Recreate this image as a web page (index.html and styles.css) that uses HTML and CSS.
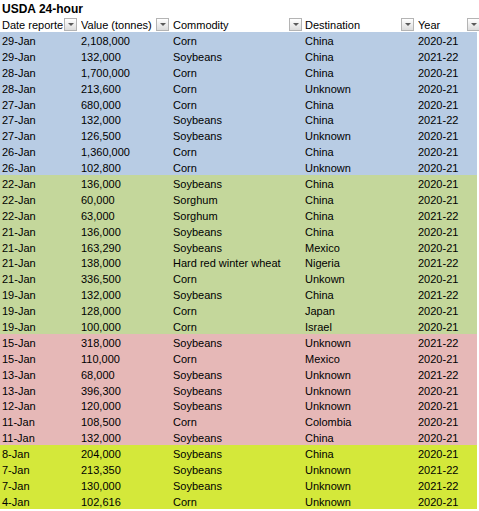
FILE: index.html
```html
<!DOCTYPE html>
<html>
<head>
<meta charset="utf-8">
<link rel="stylesheet" href="styles.css">
</head>
<body>
<div class="sheet">
  <div class="title">USDA 24-hour</div>
  <div class="row head">
    <div class="hc c1"><span class="ht">Date reported</span><span class="fb"></span></div>
    <div class="hc c2"><span class="ht">Value (tonnes)</span><span class="fb"></span></div>
    <div class="hc c3"><span class="ht">Commodity</span><span class="fb"></span></div>
    <div class="hc c4"><span class="ht">Destination</span><span class="fb"></span></div>
    <div class="hc c5"><span class="ht">Year</span><span class="fb"></span></div>
  </div>
  <div id="rows"></div>
  <div class="row blue"><div class="c1">29-Jan</div><div class="c2">2,108,000</div><div class="c3">Corn</div><div class="c4">China</div><div class="c5">2020-21</div></div>
  <div class="row blue"><div class="c1">29-Jan</div><div class="c2">132,000</div><div class="c3">Soybeans</div><div class="c4">China</div><div class="c5">2021-22</div></div>
  <div class="row blue"><div class="c1">28-Jan</div><div class="c2">1,700,000</div><div class="c3">Corn</div><div class="c4">China</div><div class="c5">2020-21</div></div>
  <div class="row blue"><div class="c1">28-Jan</div><div class="c2">213,600</div><div class="c3">Corn</div><div class="c4">Unknown</div><div class="c5">2020-21</div></div>
  <div class="row blue"><div class="c1">27-Jan</div><div class="c2">680,000</div><div class="c3">Corn</div><div class="c4">China</div><div class="c5">2020-21</div></div>
  <div class="row blue"><div class="c1">27-Jan</div><div class="c2">132,000</div><div class="c3">Soybeans</div><div class="c4">China</div><div class="c5">2021-22</div></div>
  <div class="row blue"><div class="c1">27-Jan</div><div class="c2">126,500</div><div class="c3">Soybeans</div><div class="c4">Unknown</div><div class="c5">2020-21</div></div>
  <div class="row blue"><div class="c1">26-Jan</div><div class="c2">1,360,000</div><div class="c3">Corn</div><div class="c4">China</div><div class="c5">2020-21</div></div>
  <div class="row blue"><div class="c1">26-Jan</div><div class="c2">102,800</div><div class="c3">Corn</div><div class="c4">Unknown</div><div class="c5">2020-21</div></div>
  <div class="row green"><div class="c1">22-Jan</div><div class="c2">136,000</div><div class="c3">Soybeans</div><div class="c4">China</div><div class="c5">2020-21</div></div>
  <div class="row green"><div class="c1">22-Jan</div><div class="c2">60,000</div><div class="c3">Sorghum</div><div class="c4">China</div><div class="c5">2020-21</div></div>
  <div class="row green"><div class="c1">22-Jan</div><div class="c2">63,000</div><div class="c3">Sorghum</div><div class="c4">China</div><div class="c5">2021-22</div></div>
  <div class="row green"><div class="c1">21-Jan</div><div class="c2">136,000</div><div class="c3">Soybeans</div><div class="c4">China</div><div class="c5">2020-21</div></div>
  <div class="row green"><div class="c1">21-Jan</div><div class="c2">163,290</div><div class="c3">Soybeans</div><div class="c4">Mexico</div><div class="c5">2020-21</div></div>
  <div class="row green"><div class="c1">21-Jan</div><div class="c2">138,000</div><div class="c3">Hard red winter wheat</div><div class="c4">Nigeria</div><div class="c5">2021-22</div></div>
  <div class="row green"><div class="c1">21-Jan</div><div class="c2">336,500</div><div class="c3">Corn</div><div class="c4">Unkown</div><div class="c5">2020-21</div></div>
  <div class="row green"><div class="c1">19-Jan</div><div class="c2">132,000</div><div class="c3">Soybeans</div><div class="c4">China</div><div class="c5">2021-22</div></div>
  <div class="row green"><div class="c1">19-Jan</div><div class="c2">128,000</div><div class="c3">Corn</div><div class="c4">Japan</div><div class="c5">2020-21</div></div>
  <div class="row green"><div class="c1">19-Jan</div><div class="c2">100,000</div><div class="c3">Corn</div><div class="c4">Israel</div><div class="c5">2020-21</div></div>
  <div class="row pink"><div class="c1">15-Jan</div><div class="c2">318,000</div><div class="c3">Soybeans</div><div class="c4">Unknown</div><div class="c5">2021-22</div></div>
  <div class="row pink"><div class="c1">15-Jan</div><div class="c2">110,000</div><div class="c3">Corn</div><div class="c4">Mexico</div><div class="c5">2020-21</div></div>
  <div class="row pink"><div class="c1">13-Jan</div><div class="c2">68,000</div><div class="c3">Soybeans</div><div class="c4">Unknown</div><div class="c5">2021-22</div></div>
  <div class="row pink"><div class="c1">13-Jan</div><div class="c2">396,300</div><div class="c3">Soybeans</div><div class="c4">Unknown</div><div class="c5">2020-21</div></div>
  <div class="row pink"><div class="c1">12-Jan</div><div class="c2">120,000</div><div class="c3">Soybeans</div><div class="c4">Unknown</div><div class="c5">2020-21</div></div>
  <div class="row pink"><div class="c1">11-Jan</div><div class="c2">108,500</div><div class="c3">Corn</div><div class="c4">Colombia</div><div class="c5">2020-21</div></div>
  <div class="row pink"><div class="c1">11-Jan</div><div class="c2">132,000</div><div class="c3">Soybeans</div><div class="c4">China</div><div class="c5">2020-21</div></div>
  <div class="row lime"><div class="c1">8-Jan</div><div class="c2">204,000</div><div class="c3">Soybeans</div><div class="c4">China</div><div class="c5">2020-21</div></div>
  <div class="row lime"><div class="c1">7-Jan</div><div class="c2">213,350</div><div class="c3">Soybeans</div><div class="c4">Unknown</div><div class="c5">2021-22</div></div>
  <div class="row lime"><div class="c1">7-Jan</div><div class="c2">130,000</div><div class="c3">Soybeans</div><div class="c4">Unknown</div><div class="c5">2021-22</div></div>
  <div class="row lime"><div class="c1">4-Jan</div><div class="c2">102,616</div><div class="c3">Corn</div><div class="c4">Unknown</div><div class="c5">2020-21</div></div>
</div>
</body>
</html>
```
FILE: styles.css
```css
html, body {
  margin: 0;
  padding: 0;
  background: #ffffff;
}
body {
  font-family: "Liberation Sans", Arial, sans-serif;
  font-size: 11px;
  color: #000000;
  overflow: hidden;
}
.sheet {
  width: 479px;
}
.title {
  height: 16px;
  box-sizing: border-box;
  padding: 2px 0 0 2px;
  font-size: 12px;
  font-weight: bold;
  line-height: 14px;
}
.row {
  display: grid;
  grid-template-columns: 78px 92px 133px 112px 62px;
  width: 477px;
  height: 15.9px;
  box-sizing: border-box;
  line-height: 14px;
  padding-top: 2px;
  white-space: nowrap;
}
.row > div {
  overflow: visible;
}
.c1 { padding-left: 2px; }
.c2 { padding-left: 3px; }
.c3 { padding-left: 3px; }
.c4 { padding-left: 2px; }
.c5 { padding-left: 3px; }

.head {
  height: 16px;
  width: 479px;
  grid-template-columns: 78px 92px 133px 112px 64px;
  padding-top: 0;
}
.hc {
  display: flex;
  align-items: flex-start;
  height: 16px;
  overflow: hidden;
}
.ht {
  flex: 1 1 auto;
  min-width: 0;
  overflow: hidden;
  padding-top: 2px;
  line-height: 14px;
}
.fb {
  flex: 0 0 auto;
  width: 11px;
  height: 11px;
  margin: 2px 1px 0 1px;
  border: 1px solid #b4b4b4;
  background: linear-gradient(#ffffff, #dcdcdc);
  position: relative;
}
.fb::after {
  content: "";
  position: absolute;
  left: 3px;
  top: 4px;
  border-left: 3px solid transparent;
  border-right: 3px solid transparent;
  border-top: 3px solid #5a5a5a;
}
.head .c5 .fb { margin-right: 0; }
.head .c5 .ht { flex: 0 0 48px; }

.blue { background: #b8cce4; }
.green { background: #c4d79b; }
.pink { background: #e6b8b7; }
.lime { background: #d4e83a; }
```
